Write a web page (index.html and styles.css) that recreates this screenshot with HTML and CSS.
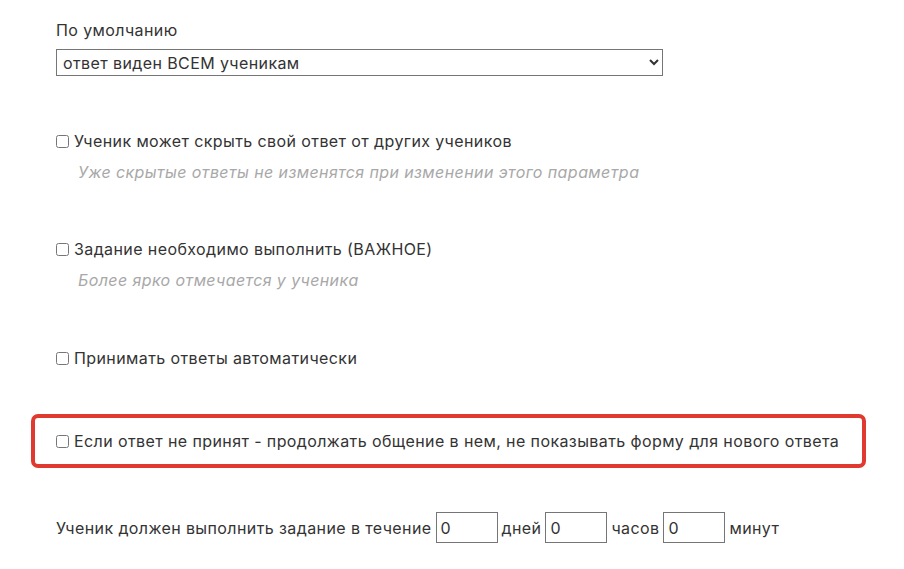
FILE: index.html
```html
<!DOCTYPE html>
<html lang="ru">
<head>
<meta charset="utf-8">
<link rel="stylesheet" href="styles.css">
</head>
<body>
<div class="page">
  <div class="field">
    <div class="label">По умолчанию</div>
    <select class="select">
      <option>ответ виден ВСЕМ ученикам</option>
    </select>
  </div>

  <div class="option first">
    <label class="check"><input type="checkbox"> Ученик может скрыть свой ответ от других учеников</label>
    <div class="hint">Уже скрытые ответы не изменятся при изменении этого параметра</div>
  </div>

  <div class="option second">
    <label class="check"><input type="checkbox"> Задание необходимо выполнить (ВАЖНОЕ)</label>
    <div class="hint">Более ярко отмечается у ученика</div>
  </div>

  <div class="option third">
    <label class="check"><input type="checkbox"> Принимать ответы автоматически</label>
  </div>

  <div class="highlight">
    <label class="check"><input type="checkbox"> Если ответ не принят - продолжать общение в нем, не показывать форму для нового ответа</label>
  </div>

  <div class="deadline">
    <span>Ученик должен выполнить задание в течение</span>
    <input class="num" type="text" value="0">
    <span>дней</span>
    <input class="num" type="text" value="0">
    <span>часов</span>
    <input class="num" type="text" value="0">
    <span>минут</span>
  </div>
</div>
</body>
</html>
```
FILE: styles.css
```css
html, body {
  margin: 0;
  padding: 0;
  background: #ffffff;
}
body {
  font-family: Inter, "Noto Sans", sans-serif;
  font-size: 16px;
  line-height: 24px;
  letter-spacing: 0.4px;
  color: #333333;
}
.page {
  padding: 18px 0 0 56px;
}
.label {
  height: 24px;
}
.select {
  display: block;
  margin-top: 7px;
  width: 607px;
  height: 27px;
  font-family: inherit;
  font-size: 16px;
  letter-spacing: 0.4px;
  color: #333333;
  border: 1px solid #767676;
  border-radius: 0;
  background: #fff;
  padding: 0 2px;
}
.option.first {
  margin-top: 53px;
}
.option.second {
  margin-top: 53px;
}
.option.third {
  margin-top: 54px;
}
.check {
  display: flex;
  align-items: center;
  height: 24px;
  white-space: nowrap;
}
.check input {
  width: 13px;
  height: 13px;
  margin: 0 5px 0 0;
}
.hint {
  margin-top: 7px;
  padding-left: 22px;
  font-style: italic;
  color: #a8a8a8;
}
.highlight {
  margin: 44px 0 0 -25px;
  width: 806px;
  border: 4px solid #e03a30;
  border-radius: 7px;
  padding: 11px 0 11px 21px;
}
.deadline {
  margin-top: 44px;
  display: flex;
  align-items: center;
  gap: 4px;
  white-space: nowrap;
}
.num {
  box-sizing: border-box;
  width: 62px;
  height: 31px;
  margin: 0;
  border: 1px solid #767676;
  padding: 0 4px;
  font-family: inherit;
  font-size: 16px;
  color: #333333;
}
```
